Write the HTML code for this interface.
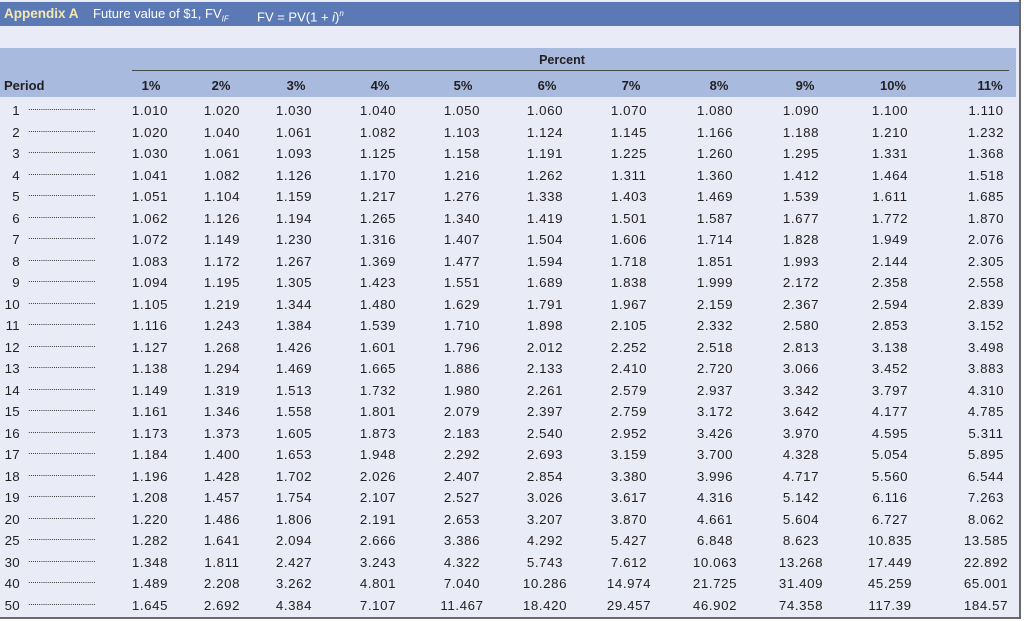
<!DOCTYPE html>
<html><head><meta charset="utf-8"><style>
*{margin:0;padding:0;box-sizing:border-box}
body{width:1024px;height:621px;background:#fff;font-family:"Liberation Sans",sans-serif;color:#231f20;position:relative;overflow:hidden}
#page{position:absolute;left:0;top:0;width:1021px;height:619px;background:#e9ebf7;border-right:2px solid #6a6a6a;border-bottom:2px solid #6a6a6a;overflow:hidden}
#bar{position:absolute;left:0;top:2px;width:1019px;height:24px;background:#5b79b5;color:#fff;font-size:13px;line-height:24px;white-space:nowrap}
#bar b{color:#f3e9b0;position:absolute;left:4px;font-size:13.5px}
#band{position:absolute;left:0;top:48px;width:1016px;height:49px;background:#a8bade}
#line{position:absolute;left:132px;top:70px;width:877px;height:1px;background:#4a4a4a}
table{position:absolute;left:0;top:100px;width:1029px;border-collapse:collapse;table-layout:fixed;font-size:13.3px;letter-spacing:0.6px}
td{height:21.5px;text-align:center;padding:0;white-space:nowrap}
td.p{text-align:left;position:relative;letter-spacing:0.3px}
td.p span{display:inline-block;width:20px;text-align:right}
td.p i{font-style:normal;position:absolute;left:28px;top:2px;font-size:9px;letter-spacing:-0.4px;color:#222}
.h{position:absolute;top:78px;font-weight:bold;font-size:13px;width:60px;text-align:center}
</style></head><body><div id="page">
<div id="bar"><b>Appendix A</b><span style="position:absolute;left:93px">Future value of $1, FV<sub style="font-size:8px;font-style:italic">IF</sub></span><span style="position:absolute;left:257px">FV = PV(1 + <i>i</i>)<sup style="font-size:8px;font-style:italic">n</sup></span></div>
<div id="band"></div><div id="line"></div>
<div class="h" style="left:532px;top:53px;font-size:12.5px">Percent</div>
<div class="h" style="left:4px;text-align:left">Period</div>
<div class="h" style="left:121px">1%</div><div class="h" style="left:191px">2%</div><div class="h" style="left:266px">3%</div><div class="h" style="left:350px">4%</div><div class="h" style="left:433px">5%</div><div class="h" style="left:517px">6%</div><div class="h" style="left:601px">7%</div><div class="h" style="left:689px">8%</div><div class="h" style="left:775px">9%</div><div class="h" style="left:863px">10%</div><div class="h" style="left:960px">11%</div>
<table>
<colgroup><col style="width:115px"><col style="width:70px"><col style="width:74px"><col style="width:70px"><col style="width:98px"><col style="width:70px"><col style="width:96px"><col style="width:72px"><col style="width:100px"><col style="width:72px"><col style="width:106px"><col style="width:86px"></colgroup>
<tr><td class="p"><span>1</span><i>................................</i></td><td>1.010</td><td>1.020</td><td>1.030</td><td>1.040</td><td>1.050</td><td>1.060</td><td>1.070</td><td>1.080</td><td>1.090</td><td>1.100</td><td>1.110</td></tr>
<tr><td class="p"><span>2</span><i>................................</i></td><td>1.020</td><td>1.040</td><td>1.061</td><td>1.082</td><td>1.103</td><td>1.124</td><td>1.145</td><td>1.166</td><td>1.188</td><td>1.210</td><td>1.232</td></tr>
<tr><td class="p"><span>3</span><i>................................</i></td><td>1.030</td><td>1.061</td><td>1.093</td><td>1.125</td><td>1.158</td><td>1.191</td><td>1.225</td><td>1.260</td><td>1.295</td><td>1.331</td><td>1.368</td></tr>
<tr><td class="p"><span>4</span><i>................................</i></td><td>1.041</td><td>1.082</td><td>1.126</td><td>1.170</td><td>1.216</td><td>1.262</td><td>1.311</td><td>1.360</td><td>1.412</td><td>1.464</td><td>1.518</td></tr>
<tr><td class="p"><span>5</span><i>................................</i></td><td>1.051</td><td>1.104</td><td>1.159</td><td>1.217</td><td>1.276</td><td>1.338</td><td>1.403</td><td>1.469</td><td>1.539</td><td>1.611</td><td>1.685</td></tr>
<tr><td class="p"><span>6</span><i>................................</i></td><td>1.062</td><td>1.126</td><td>1.194</td><td>1.265</td><td>1.340</td><td>1.419</td><td>1.501</td><td>1.587</td><td>1.677</td><td>1.772</td><td>1.870</td></tr>
<tr><td class="p"><span>7</span><i>................................</i></td><td>1.072</td><td>1.149</td><td>1.230</td><td>1.316</td><td>1.407</td><td>1.504</td><td>1.606</td><td>1.714</td><td>1.828</td><td>1.949</td><td>2.076</td></tr>
<tr><td class="p"><span>8</span><i>................................</i></td><td>1.083</td><td>1.172</td><td>1.267</td><td>1.369</td><td>1.477</td><td>1.594</td><td>1.718</td><td>1.851</td><td>1.993</td><td>2.144</td><td>2.305</td></tr>
<tr><td class="p"><span>9</span><i>................................</i></td><td>1.094</td><td>1.195</td><td>1.305</td><td>1.423</td><td>1.551</td><td>1.689</td><td>1.838</td><td>1.999</td><td>2.172</td><td>2.358</td><td>2.558</td></tr>
<tr><td class="p"><span>10</span><i>................................</i></td><td>1.105</td><td>1.219</td><td>1.344</td><td>1.480</td><td>1.629</td><td>1.791</td><td>1.967</td><td>2.159</td><td>2.367</td><td>2.594</td><td>2.839</td></tr>
<tr><td class="p"><span>11</span><i>................................</i></td><td>1.116</td><td>1.243</td><td>1.384</td><td>1.539</td><td>1.710</td><td>1.898</td><td>2.105</td><td>2.332</td><td>2.580</td><td>2.853</td><td>3.152</td></tr>
<tr><td class="p"><span>12</span><i>................................</i></td><td>1.127</td><td>1.268</td><td>1.426</td><td>1.601</td><td>1.796</td><td>2.012</td><td>2.252</td><td>2.518</td><td>2.813</td><td>3.138</td><td>3.498</td></tr>
<tr><td class="p"><span>13</span><i>................................</i></td><td>1.138</td><td>1.294</td><td>1.469</td><td>1.665</td><td>1.886</td><td>2.133</td><td>2.410</td><td>2.720</td><td>3.066</td><td>3.452</td><td>3.883</td></tr>
<tr><td class="p"><span>14</span><i>................................</i></td><td>1.149</td><td>1.319</td><td>1.513</td><td>1.732</td><td>1.980</td><td>2.261</td><td>2.579</td><td>2.937</td><td>3.342</td><td>3.797</td><td>4.310</td></tr>
<tr><td class="p"><span>15</span><i>................................</i></td><td>1.161</td><td>1.346</td><td>1.558</td><td>1.801</td><td>2.079</td><td>2.397</td><td>2.759</td><td>3.172</td><td>3.642</td><td>4.177</td><td>4.785</td></tr>
<tr><td class="p"><span>16</span><i>................................</i></td><td>1.173</td><td>1.373</td><td>1.605</td><td>1.873</td><td>2.183</td><td>2.540</td><td>2.952</td><td>3.426</td><td>3.970</td><td>4.595</td><td>5.311</td></tr>
<tr><td class="p"><span>17</span><i>................................</i></td><td>1.184</td><td>1.400</td><td>1.653</td><td>1.948</td><td>2.292</td><td>2.693</td><td>3.159</td><td>3.700</td><td>4.328</td><td>5.054</td><td>5.895</td></tr>
<tr><td class="p"><span>18</span><i>................................</i></td><td>1.196</td><td>1.428</td><td>1.702</td><td>2.026</td><td>2.407</td><td>2.854</td><td>3.380</td><td>3.996</td><td>4.717</td><td>5.560</td><td>6.544</td></tr>
<tr><td class="p"><span>19</span><i>................................</i></td><td>1.208</td><td>1.457</td><td>1.754</td><td>2.107</td><td>2.527</td><td>3.026</td><td>3.617</td><td>4.316</td><td>5.142</td><td>6.116</td><td>7.263</td></tr>
<tr><td class="p"><span>20</span><i>................................</i></td><td>1.220</td><td>1.486</td><td>1.806</td><td>2.191</td><td>2.653</td><td>3.207</td><td>3.870</td><td>4.661</td><td>5.604</td><td>6.727</td><td>8.062</td></tr>
<tr><td class="p"><span>25</span><i>................................</i></td><td>1.282</td><td>1.641</td><td>2.094</td><td>2.666</td><td>3.386</td><td>4.292</td><td>5.427</td><td>6.848</td><td>8.623</td><td>10.835</td><td>13.585</td></tr>
<tr><td class="p"><span>30</span><i>................................</i></td><td>1.348</td><td>1.811</td><td>2.427</td><td>3.243</td><td>4.322</td><td>5.743</td><td>7.612</td><td>10.063</td><td>13.268</td><td>17.449</td><td>22.892</td></tr>
<tr><td class="p"><span>40</span><i>................................</i></td><td>1.489</td><td>2.208</td><td>3.262</td><td>4.801</td><td>7.040</td><td>10.286</td><td>14.974</td><td>21.725</td><td>31.409</td><td>45.259</td><td>65.001</td></tr>
<tr><td class="p"><span>50</span><i>................................</i></td><td>1.645</td><td>2.692</td><td>4.384</td><td>7.107</td><td>11.467</td><td>18.420</td><td>29.457</td><td>46.902</td><td>74.358</td><td>117.39</td><td>184.57</td></tr>
</table>
</div></body></html>
